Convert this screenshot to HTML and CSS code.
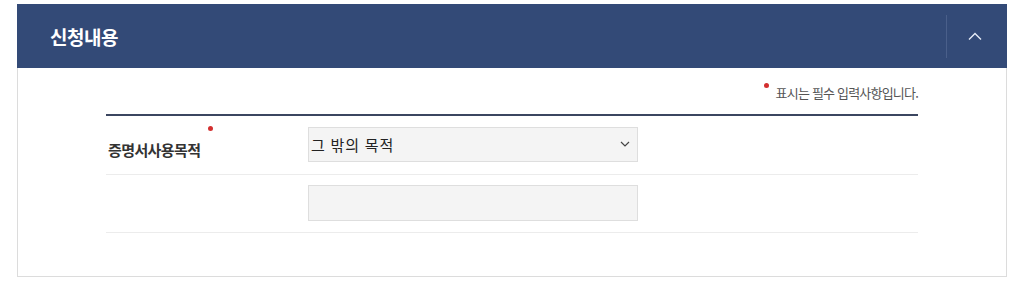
FILE: index.html
```html
<!DOCTYPE html>
<html lang="ko">
<head>
<meta charset="utf-8">
<link rel="stylesheet" href="styles.css">
</head>
<body>
<section class="panel">
  <header class="panel-head">
    <h2 class="panel-title">신청내용</h2>
    <div class="toggle">
      <svg width="14" height="8" viewBox="0 0 14 8" aria-hidden="true"><path d="M1 7.5 L7 1.5 L13 7.5" fill="none" stroke="#e6ecf7" stroke-width="1.4"/></svg>
    </div>
  </header>
  <div class="panel-body">
    <p class="notice"><span class="req"></span>표시는 필수 입력사항입니다.</p>
    <div class="form">
      <div class="row">
        <div class="label">증명서사용목적<span class="req req-label"></span></div>
        <div class="field">
          <div class="select">
            <span>그 밖의 목적</span>
            <svg width="10" height="6" viewBox="0 0 10 6" aria-hidden="true"><path d="M1 1 L5 5 L9 1" fill="none" stroke="#444" stroke-width="1.2"/></svg>
          </div>
        </div>
      </div>
      <div class="row row-2">
        <div class="label"></div>
        <div class="field"><div class="input"></div></div>
      </div>
    </div>
  </div>
</section>
</body>
</html>
```
FILE: styles.css
```css
* { box-sizing: border-box; }
html, body { margin: 0; padding: 0; background: #fff; }
body {
  padding: 4px 17px 0 17px;
  font-family: "Noto Sans CJK KR", "Noto Sans", sans-serif;
  color: #222;
}
.panel {
  width: 990px;
}
.panel-head {
  height: 64px;
  background: #334a77;
  display: flex;
  align-items: center;
  justify-content: space-between;
}
.panel-title {
  margin: 0 0 0 33px;
  font-size: 19px;
  font-weight: 700;
  color: #fff;
  letter-spacing: -0.5px;
}
.toggle {
  width: 61px;
  height: 43px;
  border-left: 1px solid #4a5f8a;
  display: flex;
  align-items: center;
  justify-content: center;
  padding-right: 4px;
}
.panel-body {
  border: 1px solid #dcdcdc;
  border-top: none;
  height: 209px;
  padding: 0 88px 0 88px;
}
.notice {
  margin: 0;
  padding-top: 15px;
  height: 46px;
  text-align: right;
  font-size: 13px;
  color: #555;
  letter-spacing: -0.8px;
  line-height: 20px;
}
.req {
  display: inline-block;
  width: 5px;
  height: 5px;
  border-radius: 50%;
  background: #d32f2f;
  vertical-align: top;
  margin-right: 7px;
  margin-top: 0;
}
.form {
  border-top: 2px solid #3b4660;
}
.row {
  display: flex;
  align-items: center;
  height: 59px;
  padding-bottom: 2px;
  border-bottom: 1px solid #ececec;
}
.row-2 { height: 58px; }
.label {
  width: 202px;
  padding-left: 2px;
  font-size: 15px;
  font-weight: 700;
  color: #333;
  letter-spacing: -0.6px;
  position: relative;
  top: 5px;
}
.req-label {
  position: absolute;
  margin: 0;
  top: -13px;
  left: 102px;
}
.field { flex: 1; }
.select, .input {
  width: 330px;
  height: 35px;
  background: #f4f4f4;
  border: 1px solid #dedede;
}
.select {
  display: flex;
  align-items: center;
  justify-content: space-between;
  padding: 0 4px 0 2px;
  font-size: 15px;
  letter-spacing: 0.8px;
  color: #222;
}
.select svg { margin-right: 3px; }
.input { height: 36px; }
```
